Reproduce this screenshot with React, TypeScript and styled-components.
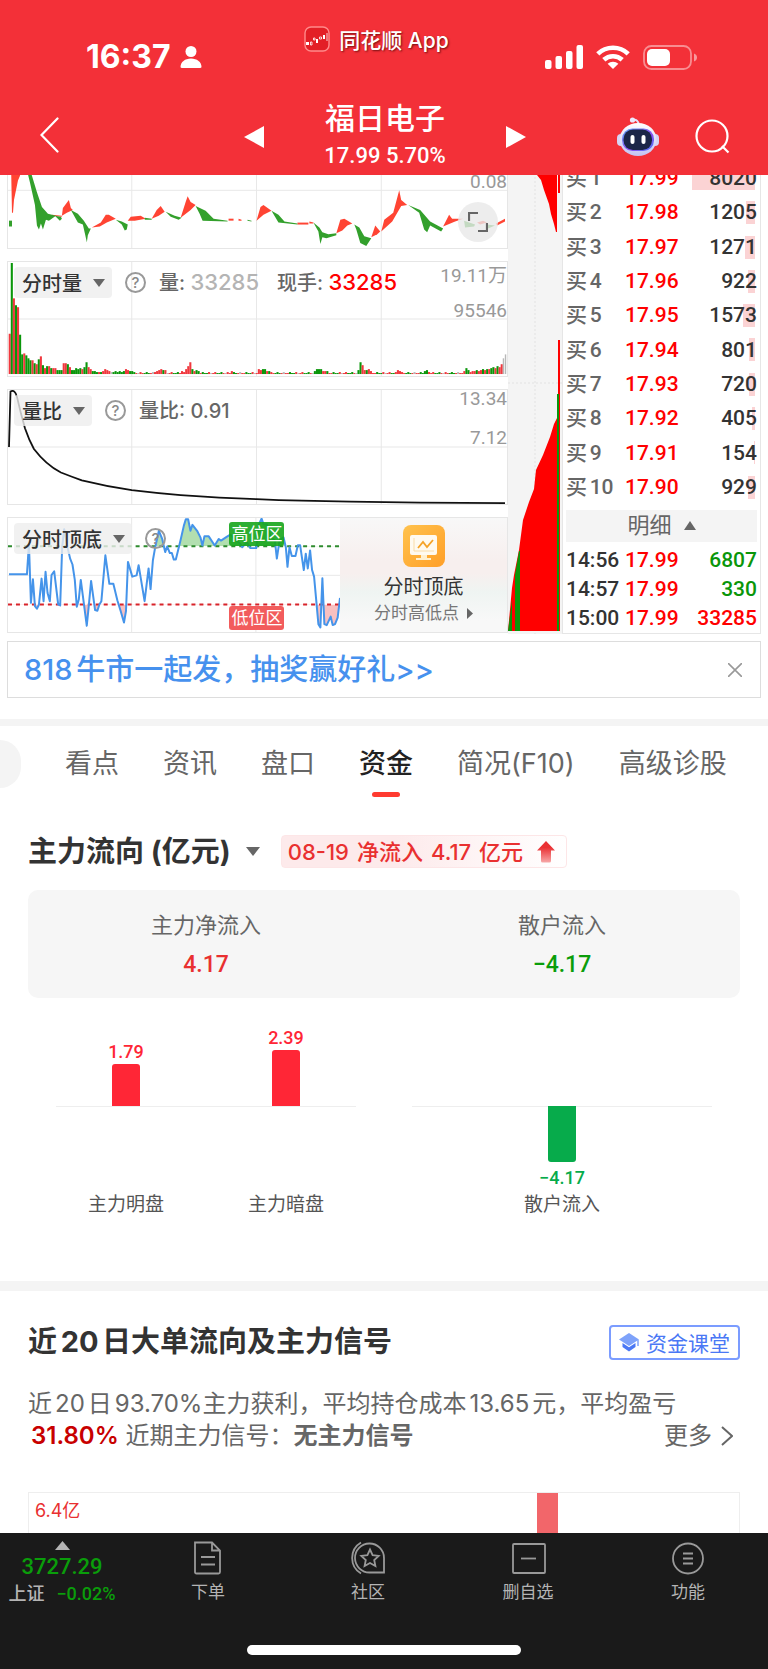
import React from "react";
import styled, { createGlobalStyle } from "styled-components";

const CJK = `"Noto Sans CJK SC", sans-serif`;
const UI = `Inter, ${CJK}`;
const NUM = `Roboto, ${CJK}`;

const Global = createGlobalStyle`
  * { box-sizing: border-box; }
  body { margin: 0; background: #fff; font-family: ${UI}; color: #333; text-autospace: normal; }
  button { border: 0; padding: 0; background: none; font: inherit; color: inherit; cursor: pointer; }
  a { color: inherit; text-decoration: none; }
  h1, h2, p, ul, dl, dd, dt { margin: 0; padding: 0; font-weight: inherit; font-size: inherit; }
  svg { display: block; flex-shrink: 0; }
`;

const Page = styled.div`
  min-height: 100vh;
  display: flex;
  flex-direction: column;
`;

/* ---------- header ---------- */
const Header = styled.header`
  position: sticky;
  top: 0;
  z-index: 5;
  background: #f33038;
  color: #fff;
`;
const StatusBar = styled.div`
  display: grid;
  grid-template-columns: minmax(0, 1fr) auto minmax(0, 1fr);
  height: 98px;
  padding-right: 15px;
`;
const StatusSide = styled.div<{ $end?: boolean }>`
  display: flex;
  align-items: center;
  justify-content: ${(p) => (p.$end ? "flex-end" : "flex-start")};
  gap: ${(p) => (p.$end ? 13 : 9)}px;
  height: 114px;
  padding: ${(p) => (p.$end ? "0 56px 0 0" : "0 0 0 86px")};
`;
const Clock = styled.time`
  font-size: 32px;
  font-weight: 700;
  line-height: 40px;
`;
const AppBadge = styled.div`
  display: flex;
  align-items: center;
  gap: 9px;
  height: 78px;
  font-size: 21px;
  font-weight: 500;
  text-shadow: 1px 1px 2px rgba(60, 0, 0, 0.7);
`;
const NavBar = styled.div`
  display: grid;
  grid-template-columns: 1fr 283px 1fr;
  align-items: center;
  height: 77px;
  padding: 0 38px 0 40px;
`;
const Switcher = styled.div`
  display: flex;
  align-items: center;
  justify-content: space-between;
`;
const Stock = styled.div`
  text-align: center;
`;
const StockName = styled.h1`
  font-size: 30px;
  font-weight: 500;
  line-height: 38px;
`;
const StockQuote = styled.p`
  font: 500 22px/38px ${NUM};
`;
const NavActions = styled.div`
  display: flex;
  justify-content: flex-end;
  align-items: center;
  gap: 36px;
`;

/* ---------- market panels ---------- */
const Market = styled.section`
  display: grid;
  grid-template-columns: minmax(0, 1fr) 54px 199px;
  margin: -14px 7px 0;
`;
const Panels = styled.div`
  display: flex;
  flex-direction: column;
  gap: 12px;
`;
const Panel = styled.div<{ $h: number }>`
  position: relative;
  height: ${(p) => p.$h}px;
  border: 1px solid #e6e6e6;
  display: flex;
`;
const Plot = styled.svg`
  position: absolute;
  inset: 0;
  width: 100%;
  height: 100%;
`;
const PanelHead = styled.div`
  position: relative;
  flex: 1;
  display: flex;
  align-items: center;
  align-self: flex-start;
  gap: 13px;
  padding: 5px 0 0 6px;
  font-size: 20px;
  white-space: nowrap;
  color: #666;
  font-weight: 500;
`;
const Picker = styled.button`
  display: flex;
  align-items: center;
  gap: 11px;
  height: 31px;
  padding: 0 7px 0 8px;
  border-radius: 4px;
  background: rgba(238, 238, 238, 0.8);
  color: #333;
`;
const HelpButton = styled.button`
  width: 21px;
  height: 21px;
  border: 2px solid #999;
  border-radius: 50%;
  font-size: 15px;
  line-height: 17px;
  color: #888;
`;
const Reading = styled.span<{ $c: string }>`
  color: ${(p) => p.$c};
  font-size: 22px;
`;
const Readings = styled.span`
  display: flex;
  gap: 18px;
  line-height: 30px;
`;
const Scale = styled.div`
  position: relative;
  display: flex;
  flex-direction: column;
  align-items: flex-end;
  font: 19px/18px ${NUM};
  text-autospace: no-autospace;
  color: #999;
`;
const ScaleValue = styled.span<{ $gap?: number }>`
  margin-top: ${(p) => p.$gap ?? 0}px;
`;
const ExpandButton = styled.button`
  position: absolute;
  right: 9px;
  bottom: 6px;
  width: 40px;
  height: 40px;
  border-radius: 50%;
  background: rgba(232, 232, 232, 0.8);
  display: grid;
  place-items: center;
`;
const TopBottom = styled.div`
  position: relative;
  flex: 1;
  min-width: 0;
`;
const ZoneTag = styled.span<{ $c: string; $top: number }>`
  position: absolute;
  left: 66.7%;
  top: ${(p) => p.$top}px;
  padding: 0 2px;
  border-radius: 3px;
  background: ${(p) => p.$c};
  color: #fff;
  font-size: 17px;
  line-height: 24px;
`;
const Feature = styled.button`
  position: relative;
  width: 167px;
  display: flex;
  flex-direction: column;
  align-items: center;
  padding-top: 7px;
  background: linear-gradient(180deg, #f8f8f8, #f7efee 38%, #f7efee 48%, #eff4f2 65%, #f8f8f8 90%);
`;
const FeatureName = styled.span`
  margin-top: 7px;
  font-size: 20px;
  line-height: 26px;
  color: #333;
`;
const FeatureNote = styled.span`
  display: flex;
  align-items: center;
  gap: 8px;
  font-size: 17px;
  line-height: 26px;
  color: #777;
`;
const Depth = styled.svg`
  width: 100%;
  height: 100%;
  background: #f4f4f4;
`;
const OrderBook = styled.div`
  border: solid #e6e6e6;
  border-width: 0 1px 1px;
  padding: 0 3px;
`;
const Orders = styled.table<{ $h: number }>`
  width: 100%;
  height: ${(p) => p.$h}px;
  border-collapse: collapse;
  table-layout: fixed;
  font: 500 21px/24px ${NUM};
`;
const Cell = styled.td<{ $c?: string; $w?: number; $right?: boolean }>`
  padding: 0;
  position: relative;
  white-space: nowrap;
  color: ${(p) => p.$c ?? "#333"};
  width: ${(p) => (p.$w ? p.$w + "px" : "auto")};
  text-align: ${(p) => (p.$right ? "right" : "left")};
`;
const CellText = styled.span`
  position: relative;
`;
const SizeBar = styled.span`
  position: absolute;
  right: 2px;
  top: 6px;
  height: 23px;
  background: #fbd3d4;
`;
const DetailToggle = styled.button`
  display: flex;
  width: 100%;
  height: 32px;
  margin: 6px 0 3px;
  padding-bottom: 2px;
  align-items: center;
  justify-content: center;
  gap: 12px;
  background: #f4f4f4;
  color: #666;
  font-size: 22px;
  line-height: 30px;
`;

/* ---------- promo ---------- */
const Promo = styled.aside`
  display: flex;
  align-items: center;
  justify-content: space-between;
  height: 57px;
  margin: 7px 7px 21px;
  padding: 0 18px 0 16px;
  border: 1px solid #ddd;
`;
const PromoLink = styled.a`
  font-size: 29px;
  line-height: 40px;
  font-weight: 500;
  color: #4691ee;
`;
const Divider = styled.div<{ $h: number }>`
  height: ${(p) => p.$h}px;
  background: #f4f4f4;
`;

/* ---------- tabs ---------- */
const Tabs = styled.nav`
  display: flex;
  align-items: flex-start;
  gap: 44px;
  height: 109px;
  padding-top: 14px;
  overflow: hidden;
`;
const PrevTab = styled.div`
  width: 21px;
  height: 48px;
  border-radius: 0 24px 24px 0;
  background: #f4f4f4;
`;
const Tab = styled.button<{ $on?: boolean }>`
  display: flex;
  flex-direction: column;
  align-items: center;
  font-size: 27px;
  line-height: 48px;
  white-space: nowrap;
  font-weight: ${(p) => (p.$on ? 500 : 400)};
  color: ${(p) => (p.$on ? "#222" : "#666")};
  &::after {
    content: "";
    width: 28px;
    height: 5px;
    margin-top: 4px;
    border-radius: 3px;
    background: ${(p) => (p.$on ? "#ff3b30" : "transparent")};
  }
`;

/* ---------- capital flow ---------- */
const Flow = styled.section`
  padding: 0 28px 64px;
`;
const FlowHead = styled.div`
  display: flex;
  align-items: center;
  height: 33px;
`;
const Heading = styled.h2`
  font-size: 29px;
  line-height: 40px;
  font-weight: 700;
  color: #333;
  white-space: nowrap;
`;
const FlowPicker = styled.button`
  display: flex;
  align-items: center;
  gap: 15px;
  margin-right: 21px;
`;
const FlowTag = styled.div`
  display: flex;
  align-items: center;
  gap: 8px;
  height: 33px;
  padding: 0 11px 0 6px;
  border: 1px solid #fde6e7;
  border-radius: 4px;
  background: linear-gradient(90deg, #fdeaeb 40%, #fff);
  color: #e93030;
  font-size: 22px;
  line-height: 30px;
  font-weight: 500;
  white-space: nowrap;
  svg { margin-left: 6px; }
`;
const Summary = styled.dl`
  display: grid;
  grid-template-columns: 1fr 1fr;
  height: 108px;
  margin-top: 22px;
  padding-top: 19px;
  border-radius: 10px;
  background: #f6f6f6;
  text-align: center;
`;
const SummaryLabel = styled.dt`
  font-size: 22px;
  line-height: 32px;
  color: #666;
`;
const SummaryValue = styled.dd<{ $c: string }>`
  margin: 4px 0 0;
  font: 500 23px/40px ${NUM};
  color: ${(p) => p.$c};
`;
const BarGroups = styled.div`
  display: grid;
  grid-template-columns: 1fr 1fr;
`;
const BarGroup = styled.div`
  position: relative;
  display: flex;
  padding: 0 18px;
  &::before {
    content: "";
    position: absolute;
    left: 28px;
    right: 28px;
    top: 108px;
    height: 1px;
    background: #eee;
  }
`;
const BarColumn = styled.div`
  position: relative;
  flex: 1;
  display: flex;
  flex-direction: column;
  align-items: center;
`;
const BarHalf = styled.div<{ $h: number; $up?: boolean; $c: string }>`
  display: flex;
  flex-direction: column;
  align-items: center;
  justify-content: ${(p) => (p.$up ? "flex-end" : "flex-start")};
  height: ${(p) => p.$h}px;
  color: ${(p) => p.$c};
  font: 500 18px/24px ${NUM};
`;
const Bar = styled.span<{ $up?: boolean }>`
  width: 28px;
  border-radius: ${(p) => (p.$up ? "3px 3px 0 0" : "0 0 3px 3px")};
  margin: ${(p) => (p.$up ? "0" : "0 0 4px")};
  background: currentColor;
`;
const BarName = styled.span`
  font-size: 19px;
  line-height: 24px;
  color: #555;
`;

/* ---------- 20 day signal ---------- */
const Signal = styled.section`
  flex: 1;
  display: flex;
  flex-direction: column;
  padding: 32px 28px 0;
`;
const SignalHead = styled.div`
  display: flex;
  justify-content: space-between;
  align-items: center;
  height: 38px;
`;
const Lesson = styled.button`
  display: flex;
  align-items: center;
  gap: 7px;
  height: 35px;
  padding: 0 8px;
  border: 2px solid #7b9cff;
  border-radius: 4px;
  color: #4a78f5;
  font-size: 21px;
`;
const Report = styled.div`
  margin-top: 27px;
  font-size: 24px;
  line-height: 32px;
  color: #666;
`;
const ReportRow = styled.div`
  display: flex;
  justify-content: space-between;
  padding: 0 7px 0 3px;
`;
const Profit = styled.strong`
  font-weight: 600;
  color: #c80000;
`;
const More = styled.a`
  display: flex;
  align-items: center;
  gap: 9px;
`;
const SignalChart = styled.div`
  flex: 1;
  min-height: 36px;
  display: grid;
  grid-template-columns: 509fr 21fr 182fr;
  margin-top: 40px;
  border: solid #eee;
  border-width: 1px 1px 0;
`;
const AxisLabel = styled.span`
  padding: 6px 6px 0;
  font-size: 18px;
  line-height: 24px;
  color: #e93030;
  text-autospace: no-autospace;
`;
const SignalBar = styled.span`
  background: #f2666a;
`;

/* ---------- bottom bar ---------- */
const BottomBar = styled.footer`
  background: #1a1a1a;
  color: #b4b4b4;
  padding-bottom: 14px;
`;
const BottomRow = styled.div`
  display: grid;
  grid-template-columns: 128px repeat(4, 1fr);
  height: 112px;
  padding-top: 8px;
`;
const IndexBox = styled.button`
  display: flex;
  flex-direction: column;
  align-items: center;
  align-self: flex-start;
  padding-right: 4px;
`;
const IndexValue = styled.span`
  margin-top: 3px;
  font: 500 22px/28px ${NUM};
  color: #0a9d0a;
`;
const IndexChange = styled.span`
  display: flex;
  gap: 12px;
  font: 500 18px/26px ${NUM};
`;
const Green = styled.span`
  color: #0a9d0a;
`;
const BottomItem = styled.button`
  display: flex;
  flex-direction: column;
  align-items: center;
  align-self: flex-start;
  gap: 4px;
  font-size: 17px;
  line-height: 26px;
`;
const HomeIndicator = styled.div`
  width: 274px;
  height: 10px;
  margin: 0 auto;
  border-radius: 5px;
  background: #fff;
`;

/* ---------- small drawings ---------- */
const Caret = ({ w = 12, h = 8, up = false, c = "#666" }: { w?: number; h?: number; up?: boolean; c?: string }) => (
  <svg width={w} height={h} viewBox="0 0 12 8" preserveAspectRatio="none">
    <path d={up ? "M0 8 6 0l6 8z" : "M0 0h12L6 8z"} fill={c} />
  </svg>
);

const Grid = ({ x, y, w, h, mid, lines }: { x: number; y: number; w: number; h: number; mid: number; lines: number[] }) => (
  <path
    d={`M${x} ${mid}H${x + w}` + lines.map((l) => `M${l} ${y}V${y + h}`).join("")}
    stroke="#e8e8e8"
    vectorEffect="non-scaling-stroke"
  />
);

const RED_WAVES = [
  "10,161 22,161 19,175 17,180 13,200 12,213 11,213",
  "51,215 61,216 61,217 51,216",
  "61,216 62,208 65,204 68,200 70,208 72,210 66,213",
  "91,228 100,223 105,215 108,215 115,219 106,223 99,227",
  "127,221 130,217 140,216 145,219 134,221",
  "151,219 156,210 160,206 164,212 158,216",
  "180,218 185,202 187,196 190,202 195,205 190,210",
  "228,219 233,219 233,221 228,221",
  "238,219 241,220 241,221 238,221",
  "256,221 260,207 263,205 271,211 263,215",
  "297,223 308,223 308,225 297,225",
  "309,222 313,223 313,224 309,224",
  "336,234 340,220 344,219 352,224 347,226 342,231",
  "371,238 375,226 380,232 377,235",
  "381,232 384,220 393,213 399,190 401,200 407,205 401,206 392,222",
  "443,227 449,215 452,219 463,219 455,222",
  "477,223 483,221 487,223 480,225",
  "496,224 505,219 505,222 497,226",
];
const GREEN_WAVES = [
  "8,221 11,221 11,227 8,227",
  "24,161 27,161 31,175 36,192 41,207 47,214 55,216 48,221 45,220 42,230 40,224 38,230 36,226 34,205 29,182",
  "54,216 60,217 61,219 59,221",
  "70,210 77,214 83,221 88,229 90,229 87,236 86,243 84,234 82,225 77,223",
  "115,220 121,222 127,225 126,230 124,231 121,225",
  "144,218 151,219 151,220 144,220",
  "165,212 174,216 181,218 178,220 170,217",
  "195,206 205,211 213,219 227,221 227,222 202,221 199,214",
  "247,220 251,221 251,222 247,221",
  "271,211 278,215 284,222 297,224 297,225 278,223",
  "313,223 319,228 322,233 328,235 336,234 336,236 326,239 322,238 320,245 318,232",
  "354,225 359,228 364,237 371,239 366,247 360,244 356,230",
  "408,205 420,210 430,222 443,229 441,232 430,226 427,233 424,230 419,213",
  "464,221 475,225 474,227 465,228",
  "487,225 495,226 488,229",
];

/* colour letter + height; minutes without an entry trade thinly */
const OPENING =
  "R41 G113 R77 G70 R68 G40 G20 R21 G19 G16 G14 R14 G11 R10 G15 R18 G9 R6 G8 R8 G6 R6 R6 G4 G4 G4 R11 R11 G10 R7 G4 G4 G6 G5 G6 R5 G7 G12 R7 R5 G3 G3 G2 R2 G2 R3 R5 R4 R3 K2 G2 G3 G2 G3 G2 G3 R5 R4 G3 G3".split(" ");
const LATER: Record<number, string> = {
  70: "R2 R3 R4 R5 G4 R4",
  83: "R3 R2 R5 R8 R12 G5 R3 G4 G3",
  107: "R3",
  120: "R5 R4 G5 G5 R3 G3",
  147: "G3 G5 G5 G5 R3 R3 G3",
  168: "G4 G12 R9 R4 G4 R5 R3",
  186: "R2 R4 R3",
  200: "G3 G4 R2",
  219: "R3 G6 G4",
  223: "R3 R3 G4 R3 R4 G5 R4 G5 R5 G6 G7 R6 G8 R7",
  237: "R10 K16 K0",
  239: "K20",
};
const minuteVolumes = (() => {
  const list = Array.from({ length: 240 }, (_, i) => ["R", "G", "K", "G", "R", "R", "G"][(i * 5) % 7] + (1 + (i % 3 === 0 ? 1 : 0)));
  OPENING.forEach((v, i) => (list[i] = v));
  Object.entries(LATER).forEach(([start, run]) => run.split(" ").forEach((v, i) => (list[+start + i] = v)));
  return list.slice(0, 240);
})();
const VOLUME_COLORS: Record<string, string> = { R: "#f0383e", G: "#0a960a", K: "#b8b8b8" };

const SWING =
  "24,583 78,583 84,490 90,670 96,598 102,680 108,688 114,676 122,596 128,665 134,575 140,640 147,665 152,585 160,574 172,675 178,678 184,500 190,445 200,500 208,535 215,553 222,600 228,682 234,660 240,600 258,740 264,680 271,603 283,692 290,694 296,675 302,665 314,525 326,612 338,612 350,662 360,695 370,730 376,695 382,545 395,590 408,586 414,555 432,665 444,565 450,628 457,540 464,500 475,450 485,475 494,515 500,498 508,518 514,518 520,538 526,538 540,480 550,435 556,415 563,415 570,450 576,432 590,450 600,470 606,495 612,467 625,467 643,495 655,475 662,480 680,468 690,462 720,490 726,500 740,485 750,503 768,503 776,430 784,413 790,430 800,430 812,470 824,480 830,535 838,480 850,470 857,500 862,560 868,500 875,527 886,527 893,494 900,494 911,570 917,520 923,565 930,510 936,570 942,590 955,735 961,745 967,595 973,735 980,738 992,712 998,738 1005,735 1013,715 1020,655";

const AppLogo = () => (
  <svg width="26" height="26" viewBox="0 0 26 26">
    <rect x="1" y="1" width="24" height="24" rx="6" fill="#e31f26" stroke="#ff8a8a" strokeWidth="1.4" />
    <path d="M2 16h3v3H2zM12 13h2v4h-2zM19 9h2v4h-2z" fill="#fff" />
    <path d="M6.500 16h1.500v3H6.500zM9.500 12h1.500v2H9.500zM15.500 11h2v2h-2zM23 7v8" fill="none" stroke="#fff" strokeWidth="0.800" />
  </svg>
);
const Person = () => (
  <svg width="22" height="24" viewBox="0 0 22 24">
    <circle cx="11" cy="6.500" r="5.500" fill="#fff" />
    <path d="M.5 22c0-5 4.500-8.500 10.500-8.500S21.500 17 21.500 22q0 1-1.500 1H2Q.5 23 .5 22z" fill="#fff" />
  </svg>
);
const SignalBars = () => (
  <svg width="38" height="24" viewBox="0 0 38 24" fill="#fff">
    <rect y="15" width="6.500" height="9" rx="2" />
    <rect x="10.500" y="11" width="6.500" height="13" rx="2" />
    <rect x="21" y="6" width="6.500" height="18" rx="2" />
    <rect x="31.500" width="6.500" height="24" rx="2" />
  </svg>
);
const Wifi = () => (
  <svg width="34" height="24" viewBox="0 0 34 24" fill="none" stroke="#fff" strokeWidth="4.600">
    <path d="M1.800 8.800a22 22 0 0 1 30.400 0M7.800 14.800a13.500 13.500 0 0 1 18.400 0" />
    <path d="M17 24l-5.400-5.200a8 8 0 0 1 10.800 0z" fill="#fff" stroke="none" />
  </svg>
);
const Battery = () => (
  <svg width="54" height="25" viewBox="0 0 54 25">
    <rect x="1" y="1" width="47" height="23" rx="7.500" fill="none" stroke="#fff" strokeOpacity=".45" strokeWidth="1.800" />
    <rect x="4" y="4" width="23" height="17" rx="5" fill="#fff" />
    <path d="M51 8.500q3 1.200 3 4t-3 4z" fill="#fff" fillOpacity=".5" />
  </svg>
);
const Robot = () => (
  <svg width="42" height="40" viewBox="0 0 42 40">
    <defs>
      <linearGradient id="shell" x1="0" y1="0" x2="0" y2="1">
        <stop offset="0" stopColor="#fff" />
        <stop offset="1" stopColor="#c3c2f2" />
      </linearGradient>
      <linearGradient id="rim" x1="0" y1="0" x2="1" y2="1">
        <stop offset="0" stopColor="#5fa3f5" />
        <stop offset=".6" stopColor="#8b4cf0" />
        <stop offset="1" stopColor="#4a7df5" />
      </linearGradient>
    </defs>
    <path d="M16 3q5-1 6 5" fill="none" stroke="#e6e0f8" strokeWidth="2" />
    <circle cx="15.500" cy="3" r="2.600" fill="#ece8fb" />
    <rect x="0" y="17" width="8" height="12" rx="4" fill="#d5d4f5" />
    <rect x="34" y="17" width="8" height="12" rx="4" fill="#d5d4f5" />
    <ellipse cx="21" cy="22.500" rx="18.500" ry="16.500" fill="url(#shell)" />
    <rect x="5" y="11.500" width="32" height="22.500" rx="10.500" fill="url(#rim)" />
    <rect x="6.500" y="12.500" width="28.500" height="20.500" rx="9.500" fill="#1b2547" />
    <rect x="13.500" y="18" width="4" height="9" rx="2" fill="#fff" />
    <rect x="24.500" y="18" width="4" height="9" rx="2" fill="#fff" />
  </svg>
);
const FeatureIcon = () => (
  <svg width="42" height="42" viewBox="0 0 42 42">
    <defs>
      <linearGradient id="amber" x1="0" y1="0" x2="1" y2="1">
        <stop offset="0" stopColor="#ffc24d" />
        <stop offset="1" stopColor="#ff9f28" />
      </linearGradient>
    </defs>
    <rect width="42" height="42" rx="8" fill="url(#amber)" />
    <rect x="7" y="10" width="27" height="20" rx="2" fill="#fffaf0" />
    <path d="M18 30h6v3h4v2H13v-2h5z" fill="#fff0d0" />
    <path d="M11 13v13h20" fill="none" stroke="#f9dca8" />
    <path d="M15 23l5-6 4 5 6-7" fill="none" stroke="#f5a328" strokeWidth="1.800" />
  </svg>
);

const bids: [string, number][] = [
  ["17.99", 8020], ["17.98", 1205], ["17.97", 1271], ["17.96", 922], ["17.95", 1573],
  ["17.94", 801], ["17.93", 720], ["17.92", 405], ["17.91", 154], ["17.90", 929],
];
const trades = [
  ["14:56", "17.99", "6807", "#0a960a"],
  ["14:57", "17.99", "330", "#0a960a"],
  ["15:00", "17.99", "33285", "#ff0000"],
];
const tabs = ["看点", "资讯", "盘口", "资金", "简况(F10)", "高级诊股"];

const FlowBar = ({ name, value, size }: { name: string; value: string; size: number }) => {
  const up = !value.startsWith("−");
  const c = up ? "#ff2636" : "#07ab4b";
  return (
    <BarColumn>
      <BarHalf $h={108} $up $c={c}>
        {up && <>{value}<Bar $up style={{ height: size }} /></>}
      </BarHalf>
      <BarHalf $h={87} $c={c}>
        {!up && <><Bar style={{ height: size }} />{value}</>}
      </BarHalf>
      <BarName>{name}</BarName>
    </BarColumn>
  );
};

export default function App() {
  return (
    <Page>
      <Global />
      <Header>
        <StatusBar>
          <StatusSide>
            <Clock>16:37</Clock>
            <Person />
          </StatusSide>
          <AppBadge>
            <AppLogo />
            <span>同花顺 App</span>
          </AppBadge>
          <StatusSide $end>
            <SignalBars />
            <Wifi />
            <Battery />
          </StatusSide>
        </StatusBar>
        <NavBar>
          <div>
            <button aria-label="返回">
              <svg width="22" height="36" viewBox="0 0 22 36" fill="none" stroke="#fff" strokeWidth="2.200">
                <path d="M17.500 1.500 1.500 18l16 16.500" strokeLinecap="round" />
              </svg>
            </button>
          </div>
          <Switcher>
            <button aria-label="上一只">
              <svg width="20" height="22" viewBox="0 0 20 22"><path d="M20 0v22L0 11z" fill="#fff" /></svg>
            </button>
            <Stock>
              <StockName>福日电子</StockName>
              <StockQuote>17.99 5.70%</StockQuote>
            </Stock>
            <button aria-label="下一只">
              <svg width="20" height="22" viewBox="0 0 20 22"><path d="M0 0v22l20-11z" fill="#fff" /></svg>
            </button>
          </Switcher>
          <NavActions>
            <button aria-label="智能助手"><Robot /></button>
            <button aria-label="搜索">
              <svg width="35" height="35" viewBox="0 0 35 35" fill="none" stroke="#fff" strokeWidth="2.200">
                <circle cx="17" cy="17" r="15.500" />
                <path d="m27 27 6.500 6.500" />
              </svg>
            </button>
          </NavActions>
        </NavBar>
      </Header>

      <Market>
        <Panels>
          <Panel $h={88}>
            <Plot viewBox="7 161 500 88" preserveAspectRatio="none">
              <Grid x={7} y={161} w={500} h={88} mid={190} lines={[131, 256, 381]} />
              {RED_WAVES.map((p) => <polygon key={p} points={p} fill="#ff4433" />)}
              {GREEN_WAVES.map((p) => <polygon key={p} points={p} fill="#33a02c" />)}
            </Plot>
            <PanelHead />
            <Scale><ScaleValue $gap={11}>0.08</ScaleValue></Scale>
            <ExpandButton aria-label="全屏">
              <svg width="20" height="20" viewBox="0 0 20 20" fill="none" stroke="#666" strokeWidth="2.200">
                <path d="M1 9V1h9M19 11v8h-9" />
              </svg>
            </ExpandButton>
          </Panel>

          <Panel $h={116}>
            <Plot viewBox="7 260 500 116" preserveAspectRatio="none">
              <Grid x={7} y={260} w={500} h={116} mid={318} lines={[131, 256, 381]} />
              {minuteVolumes.map((v, i) => {
                const h = +v.slice(1);
                return <rect key={i} x={7.7 + i * 2.08} y={374 - h} width={v[0] === "K" && h > 9 ? 1.4 : 2.08} height={h} fill={VOLUME_COLORS[v[0]]} />;
              })}
            </Plot>
            <PanelHead>
              <Picker>分时量<Caret /></Picker>
              <HelpButton aria-label="说明">?</HelpButton>
              <Readings>
                <span>量: <Reading $c="#b4b4b4">33285</Reading></span>
                <span>现手: <Reading $c="#ff0000">33285</Reading></span>
              </Readings>
            </PanelHead>
            <Scale>
              <ScaleValue $gap={5}>19.11万</ScaleValue>
              <ScaleValue $gap={17}>95546</ScaleValue>
            </Scale>
          </Panel>

          <Panel $h={116}>
            <Plot viewBox="7 389 500 116" preserveAspectRatio="none">
              <Grid x={7} y={389} w={500} h={116} mid={447} lines={[131, 256, 381]} />
              <path
                d="M8 447 9.500 390.500Q14 388 16 396L20 413 24 428Q28 440 33 449 45 465 60 473 70 477 81 481 105 487 131 491 155 494 180 496 220 499 256 500 300 502 350 502.500L420 503.600 505 504"
                fill="none" stroke="#111" strokeWidth="1.800"
              />
            </Plot>
            <PanelHead>
              <Picker>量比<Caret /></Picker>
              <HelpButton aria-label="说明">?</HelpButton>
              <Readings><span>量比: 0.91</span></Readings>
            </PanelHead>
            <Scale>
              <ScaleValue>13.34</ScaleValue>
              <ScaleValue $gap={21}>7.12</ScaleValue>
            </Scale>
          </Panel>

          <Panel $h={116}>
            <TopBottom>
              <Plot viewBox="21 411 999 348" preserveAspectRatio="none">
                <defs>
                  <clipPath id="aboveHigh"><rect x="21" y="411" width="999" height="86" /></clipPath>
                  <clipPath id="belowLow"><rect x="21" y="675" width="999" height="90" /></clipPath>
                </defs>
                <Grid x={21} y={411} w={999} h={348} mid={586} lines={[393, 767]} />
                <polygon points={`457,497 ${SWING.slice(SWING.indexOf("464,500"))} 1020,497`} fill="#b2dfb0" clipPath="url(#aboveHigh)" />
                <polygon points={`24,675 ${SWING} 1020,675`} fill="#f8c0c0" clipPath="url(#belowLow)" />
                <path d="M21 497H1020" stroke="#2e8b2e" strokeWidth="6" strokeDasharray="12 12" />
                <path d="M21 675H1020" stroke="#d8232a" strokeWidth="6" strokeDasharray="12 12" />
                <polyline points={SWING} fill="none" stroke="#4594ea" strokeWidth="6" strokeLinejoin="round" />
              </Plot>
              <PanelHead>
                <Picker>分时顶底<Caret /></Picker>
                <HelpButton aria-label="说明">?</HelpButton>
              </PanelHead>
              <ZoneTag $c="rgba(22,165,28,0.9)" $top={4}>高位区</ZoneTag>
              <ZoneTag $c="#f25c5c" $top={88}>低位区</ZoneTag>
            </TopBottom>
            <Feature>
              <FeatureIcon />
              <FeatureName>分时顶底</FeatureName>
              <FeatureNote>
                分时高低点
                <svg width="6" height="11" viewBox="0 0 6 11"><path d="M0 0v11l6-5.500z" fill="#666" /></svg>
              </FeatureNote>
            </Feature>
          </Panel>
        </Panels>

        <Depth viewBox="508 161 54 473" preserveAspectRatio="none">
          <path d="M535 161V634M508 383H562" stroke="#e2e2e2" strokeDasharray="2 2" />
          <path d="M531 161 537 175 541 180 544 190 549 204 551 214 554 224 556 232H557V161z" fill="#f00" />
          <path d="M558 161h2v32h-2zM558 340h2v291h-2z" fill="#f00" />
          <path d="M557 418 554 424 550 437 543 455 536 470 534 489 529 502 523 520 519 550 514 575 512 588 508 631H557z" fill="#f00" />
          <path d="M519 551 515 575V631H520V551zM512 600 508 631H512zM557 394h2v237h-2z" fill="#0a960a" />
        </Depth>

        <OrderBook>
          <Orders $h={343} aria-label="买盘">
            <tbody>
              {bids.map(([price, size], i) => (
                <tr key={price}>
                  <Cell $c="#666" $w={59}>买{i + 1}</Cell>
                  <Cell $c="#ff0000">{price}</Cell>
                  <Cell $right $w={66}>
                    <SizeBar style={{ width: Math.round(size / 127) }} />
                    <CellText>{size}</CellText>
                  </Cell>
                </tr>
              ))}
            </tbody>
          </Orders>
          <DetailToggle>明细<Caret up h={9} /></DetailToggle>
          <Orders $h={88} aria-label="成交明细">
            <tbody>
              {trades.map(([time, price, size, color]) => (
                <tr key={time}>
                  <Cell $w={59}>{time}</Cell>
                  <Cell $c="#ff0000">{price}</Cell>
                  <Cell $right $w={66} $c={color}>{size}</Cell>
                </tr>
              ))}
            </tbody>
          </Orders>
        </OrderBook>
      </Market>

      <Promo>
        <PromoLink href="#promo">818牛市一起发，抽奖赢好礼&gt;&gt;</PromoLink>
        <button aria-label="关闭">
          <svg width="14" height="14" viewBox="0 0 14 14" stroke="#999" strokeWidth="1.600"><path d="m0 0 14 14M14 0 0 14" /></svg>
        </button>
      </Promo>
      <Divider $h={7} />

      <Tabs>
        <PrevTab />
        {tabs.map((t) => <Tab key={t} $on={t === "资金"}>{t}</Tab>)}
      </Tabs>

      <Flow>
        <FlowHead>
          <FlowPicker>
            <Heading>主力流向 (亿元)</Heading>
            <Caret w={14} h={9} />
          </FlowPicker>
          <FlowTag>
            <span>08-19</span>
            <span>净流入</span>
            <span>4.17</span>
            <span>亿元</span>
            <svg width="18" height="22" viewBox="0 0 18 22">
              <defs>
                <linearGradient id="rise" x1="0" y1="0" x2="0" y2="1">
                  <stop offset=".3" stopColor="#ea3033" />
                  <stop offset="1" stopColor="#f7a8a8" />
                </linearGradient>
              </defs>
              <path d="M9 0l9 9.500h-4V20q0 1.500-1.500 1.500h-7Q4 21.500 4 20V9.500H0z" fill="url(#rise)" />
            </svg>
          </FlowTag>
        </FlowHead>
        <Summary>
          <div>
            <SummaryLabel>主力净流入</SummaryLabel>
            <SummaryValue $c="#e93030">4.17</SummaryValue>
          </div>
          <div>
            <SummaryLabel>散户流入</SummaryLabel>
            <SummaryValue $c="#0a9d0a">−4.17</SummaryValue>
          </div>
        </Summary>
        <BarGroups>
          <BarGroup>
            <FlowBar name="主力明盘" value="1.79" size={42} />
            <FlowBar name="主力暗盘" value="2.39" size={56} />
          </BarGroup>
          <BarGroup>
            <FlowBar name="散户流入" value="−4.17" size={56} />
          </BarGroup>
        </BarGroups>
      </Flow>
      <Divider $h={10} />

      <Signal>
        <SignalHead>
          <Heading>近20日大单流向及主力信号</Heading>
          <Lesson>
            <svg width="20" height="20" viewBox="0 0 20 20">
              <path d="M10 1l10 6.500-10 6.500L0 7.500z" fill="#7ea2fa" />
              <path d="M3.500 11l6.500 4.300 6.500-4.300v4L10 19.500 3.500 15z" fill="#4a78f5" />
              <path d="M19 8v6" stroke="#7ea2fa" strokeWidth="1.500" />
            </svg>
            资金课堂
          </Lesson>
        </SignalHead>
        <Report>
          <p>近20日93.70%主力获利，平均持仓成本13.65元，平均盈亏</p>
          <ReportRow>
            <p><Profit>31.80%</Profit> 近期主力信号：<strong>无主力信号</strong></p>
            <More href="#more">
              更多
              <svg width="12" height="20" viewBox="0 0 12 20" fill="none" stroke="#666" strokeWidth="2"><path d="m1 1 10 9-10 9" /></svg>
            </More>
          </ReportRow>
        </Report>
        <SignalChart>
          <AxisLabel>6.4亿</AxisLabel>
          <SignalBar />
        </SignalChart>
      </Signal>

      <BottomBar>
        <BottomRow>
          <IndexBox>
            <Caret up w={15} h={9} c="#b4b4b4" />
            <IndexValue>3727.29</IndexValue>
            <IndexChange>上证 <Green>−0.02%</Green></IndexChange>
          </IndexBox>
          <BottomItem>
            <svg width="36" height="34" viewBox="0 0 36 34" fill="none" stroke="#999" strokeWidth="1.800">
              <path d="M5 1.500h17l8 8V31q0 1.500-1.500 1.500h-22Q5 32.500 5 31zM22 1.500v8h8M11 16h14M11 23.500h14" />
            </svg>
            下单
          </BottomItem>
          <BottomItem>
            <svg width="36" height="34" viewBox="0 0 36 34" fill="none" stroke="#999" strokeWidth="1.800">
              <path d="M11 1.500a18 18 0 0 0 0 31" />
              <path d="M34 17v14.500H20A14.500 14.500 0 1 1 34 17z" />
              <path d="m20 8.500 2.600 5.600 6.100.7-4.500 4.200 1.200 6-5.400-3-5.400 3 1.200-6-4.500-4.200 6.100-.7z" />
            </svg>
            社区
          </BottomItem>
          <BottomItem>
            <svg width="36" height="34" viewBox="0 0 36 34" fill="none" stroke="#999" strokeWidth="1.800">
              <rect x="3" y="3" width="32" height="29" rx="1" />
              <path d="M11 17.500h15" />
            </svg>
            删自选
          </BottomItem>
          <BottomItem>
            <svg width="36" height="34" viewBox="0 0 36 34" fill="none" stroke="#999" strokeWidth="1.800">
              <circle cx="18" cy="17.500" r="15" />
              <path d="M13 12.500h10M13 17.500h10M13 22.500h10" />
            </svg>
            功能
          </BottomItem>
        </BottomRow>
        <HomeIndicator />
      </BottomBar>
    </Page>
  );
}
